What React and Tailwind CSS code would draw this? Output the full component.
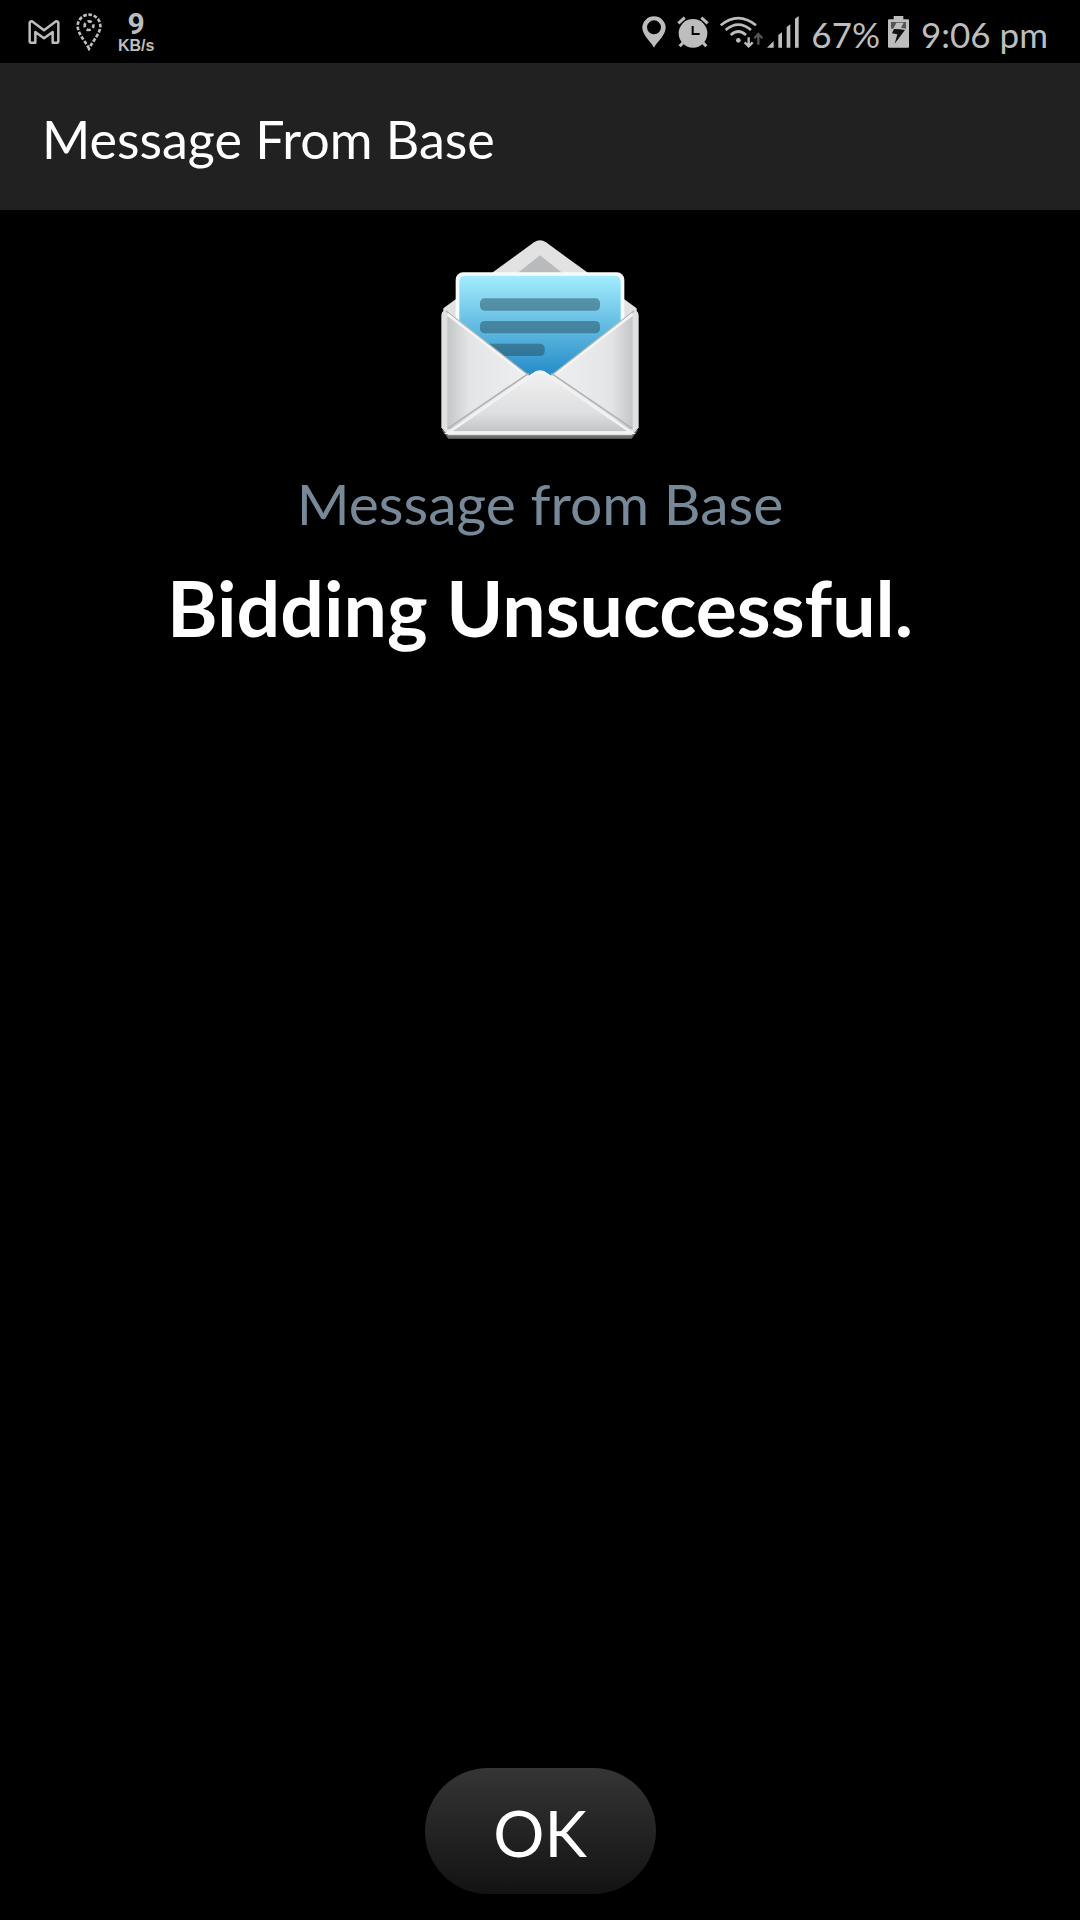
function GmailIcon() {
  return (
    <svg aria-hidden="true" className="h-6 w-8" viewBox="0 0 96 72" fill="none" stroke="#bdbdbd" strokeWidth="7.5" strokeLinejoin="round">
      <path d="M5 10Q5 4 12 4L48 31L84 4Q91 4 91 10V64Q91 68 87 68H74V36L48 55L22 36V68H9Q5 68 5 64Z" />
    </svg>
  )
}

function DottedPinIcon() {
  return (
    <svg aria-hidden="true" className="h-[38px] w-[26px]" viewBox="0 0 78 114" fill="none" stroke="#bdbdbd" strokeWidth="8">
      <path d="M39 107C28 84 5 62 5 39A34 34 0 0 1 73 39C73 62 50 84 39 107Z" strokeDasharray="11 5" />
      <circle cx="39" cy="38" r="13" strokeDasharray="13 7.4" strokeDashoffset="6" />
    </svg>
  )
}

function LocationIcon() {
  return (
    <svg aria-hidden="true" className="h-8 w-6" viewBox="0 0 72 96" fill="#bdbdbd">
      <path fillRule="evenodd" d="M36 95C28 78 1 58 1 35A35 34 0 0 1 71 35C71 58 44 78 36 95ZM36 13A21 21 0 1 0 36 55A21 21 0 1 0 36 13Z" />
    </svg>
  )
}

function AlarmIcon() {
  return (
    <svg aria-hidden="true" className="h-8 w-8" viewBox="0 0 96 96">
      <circle cx="48" cy="52" r="43" fill="#bdbdbd" />
      <g fill="none" stroke="#bdbdbd" strokeWidth="9">
        <path d="M4 22L23 5M73 5L92 22" />
        <path d="M18 80L8 91M78 80L88 91" />
      </g>
      <path d="M47 30V54H68" fill="none" stroke="#000" strokeWidth="6" />
    </svg>
  )
}

function WifiIcon() {
  return (
    <svg aria-hidden="true" className="h-8 w-[43px]" viewBox="0 0 129 96" fill="none" stroke="#bdbdbd" strokeWidth="8">
      <path d="M2 28Q55 -15 108 28M17 42Q55 10 93 42M32 57Q55 36 78 57" />
      <circle cx="55" cy="73" r="7" fill="#bdbdbd" stroke="none" />
      <path d="M86 64V90M74 79L86 91L98 79" strokeWidth="7" />
      <path d="M115 86V56M103 67L115 54L127 67" stroke="#555555" strokeWidth="7" />
    </svg>
  )
}

function SignalIcon() {
  return (
    <svg aria-hidden="true" className="h-8 w-8" viewBox="0 0 96 96" fill="#bdbdbd">
      <path d="M0 95L20 75V95ZM34 95V57L45 49V95ZM59 95V33L70 25V95ZM84 95V8L95 0V95Z" />
    </svg>
  )
}

function BatteryIcon() {
  return (
    <svg aria-hidden="true" className="h-8 w-[21px]" viewBox="0 0 63 96">
      <path d="M17 0H46V10H60Q63 10 63 13V92Q63 95 60 95H3Q0 95 0 92V13Q0 10 3 10H17Z" fill="#bdbdbd" />
      <path d="M9 18H54V38H9Z" fill="#555555" />
      <path d="M25 20H47L39 35L51 38L19 82L28 53L11 49Z" fill="#bdbdbd" />
      <path d="M18 39L37 40L51 42L20 83L28 55L12 52Z" fill="#111" />
    </svg>
  )
}

function EnvelopeIcon() {
  return (
    <svg role="img" aria-label="Open envelope" className="h-[200px] w-[200px]" viewBox="60 54 600 600">
      <defs>
        <linearGradient id="paper" x1="0" y1="0" x2="0" y2="1">
          <stop offset="0" stopColor="#a2edfd" />
          <stop offset="0.45" stopColor="#68bfe4" />
          <stop offset="1" stopColor="#1f88c6" />
        </linearGradient>
        <linearGradient id="body" x1="0" y1="0" x2="1" y2="0">
          <stop offset="0" stopColor="#c5c6c8" />
          <stop offset="0.12" stopColor="#e3e5e7" />
          <stop offset="0.5" stopColor="#f0f1f2" />
          <stop offset="0.88" stopColor="#e3e5e7" />
          <stop offset="1" stopColor="#c5c6c8" />
        </linearGradient>
        <linearGradient id="flap" x1="0" y1="0" x2="0" y2="1">
          <stop offset="0" stopColor="#f1f1f2" />
          <stop offset="0.7" stopColor="#dedfe0" />
          <stop offset="1" stopColor="#c4c5c7" />
        </linearGradient>
      </defs>
      <path d="M70 262L342 64Q360 52 378 64L650 262V330H70Z" fill="#e2e2e3" />
      <path d="M290 158L360 103L430 158Z" fill="#b9babc" />
      <rect x="107" y="154" width="506" height="330" rx="22" fill="#f5fcff" />
      <path d="M118 182Q118 164 136 164H584Q602 164 602 182V310L390 475H330L118 310Z" fill="url(#paper)" />
      <g fill="#234a58" fillOpacity="0.48">
        <rect x="180" y="232" width="360" height="37" rx="14" />
        <rect x="180" y="300" width="360" height="37" rx="14" />
        <rect x="180" y="368" width="194" height="37" rx="14" />
      </g>
      <path d="M85 653H635L654 628H66Z" fill="#6c6c6c" />
      <path d="M64 285Q64 266 82 270L326 463H394L638 270Q656 266 656 285V620L635 643H85L64 620Z" fill="#e0e1e2" />
      <path d="M82 286L322 469H398L638 286V625H82Z" fill="url(#body)" />
      <path d="M78 270L326 463M642 270L394 463" fill="none" stroke="#aeb0b1" strokeWidth="4" />
      <path d="M82 279L322 467M638 279L398 467" fill="none" stroke="#f5f5f5" strokeWidth="7" />
      <path d="M90 630L338 460Q360 440 382 460L630 630Z" fill="url(#flap)" />
      <path d="M84 622L326 457M636 622L394 457" fill="none" stroke="#b1b2b4" strokeWidth="5" />
      <path d="M85 635L338 461Q360 443 382 461L635 635Z" fill="none" stroke="#f2f2f2" strokeWidth="8" />
    </svg>
  )
}

export default function App() {
  return (
    <div className="flex min-h-screen flex-col bg-black font-['Lato',sans-serif] text-white">
      <div className="flex h-[63px] items-center justify-between pr-8 pl-7 text-[#bdbdbd]">
        <div className="flex items-center gap-4">
          <GmailIcon />
          <DottedPinIcon />
          <div className="flex flex-col items-center font-bold">
            <span className="font-['Roboto',sans-serif] text-[30px] leading-7">9</span>
            <span className="font-['Liberation_Sans',sans-serif] text-base leading-4">KB/s</span>
          </div>
        </div>
        <div className="flex items-center gap-2">
          <div className="flex items-center gap-1">
            <div className="flex items-center gap-[11px]">
              <LocationIcon />
              <AlarmIcon />
              <WifiIcon />
            </div>
            <SignalIcon />
          </div>
          <span className="ml-1 pt-1 text-[35px] leading-10">67%</span>
          <BatteryIcon />
          <span className="ml-1 pt-1 text-[35px] leading-10">9:06 pm</span>
        </div>
      </div>
      <header className="flex h-[147px] items-center bg-[#212121] px-[42px] pt-1">
        <h1 className="text-[52px] leading-[60px]">Message From Base</h1>
      </header>
      <main className="flex flex-1 flex-col items-center pt-[29px] pb-[26px]">
        <EnvelopeIcon />
        <h2 className="mt-8 text-[57px] leading-[64px] text-[#778899]">Message from Base</h2>
        <p className="mt-7 text-center text-[77px] leading-[88px] font-bold">Bidding Unsuccessful.</p>
        <button type="button" className="mt-auto h-[126px] w-[231px] rounded-full bg-linear-to-b from-[#353535] to-[#131313] pt-1 text-[64px] leading-[72px]">
          OK
        </button>
      </main>
    </div>
  )
}
